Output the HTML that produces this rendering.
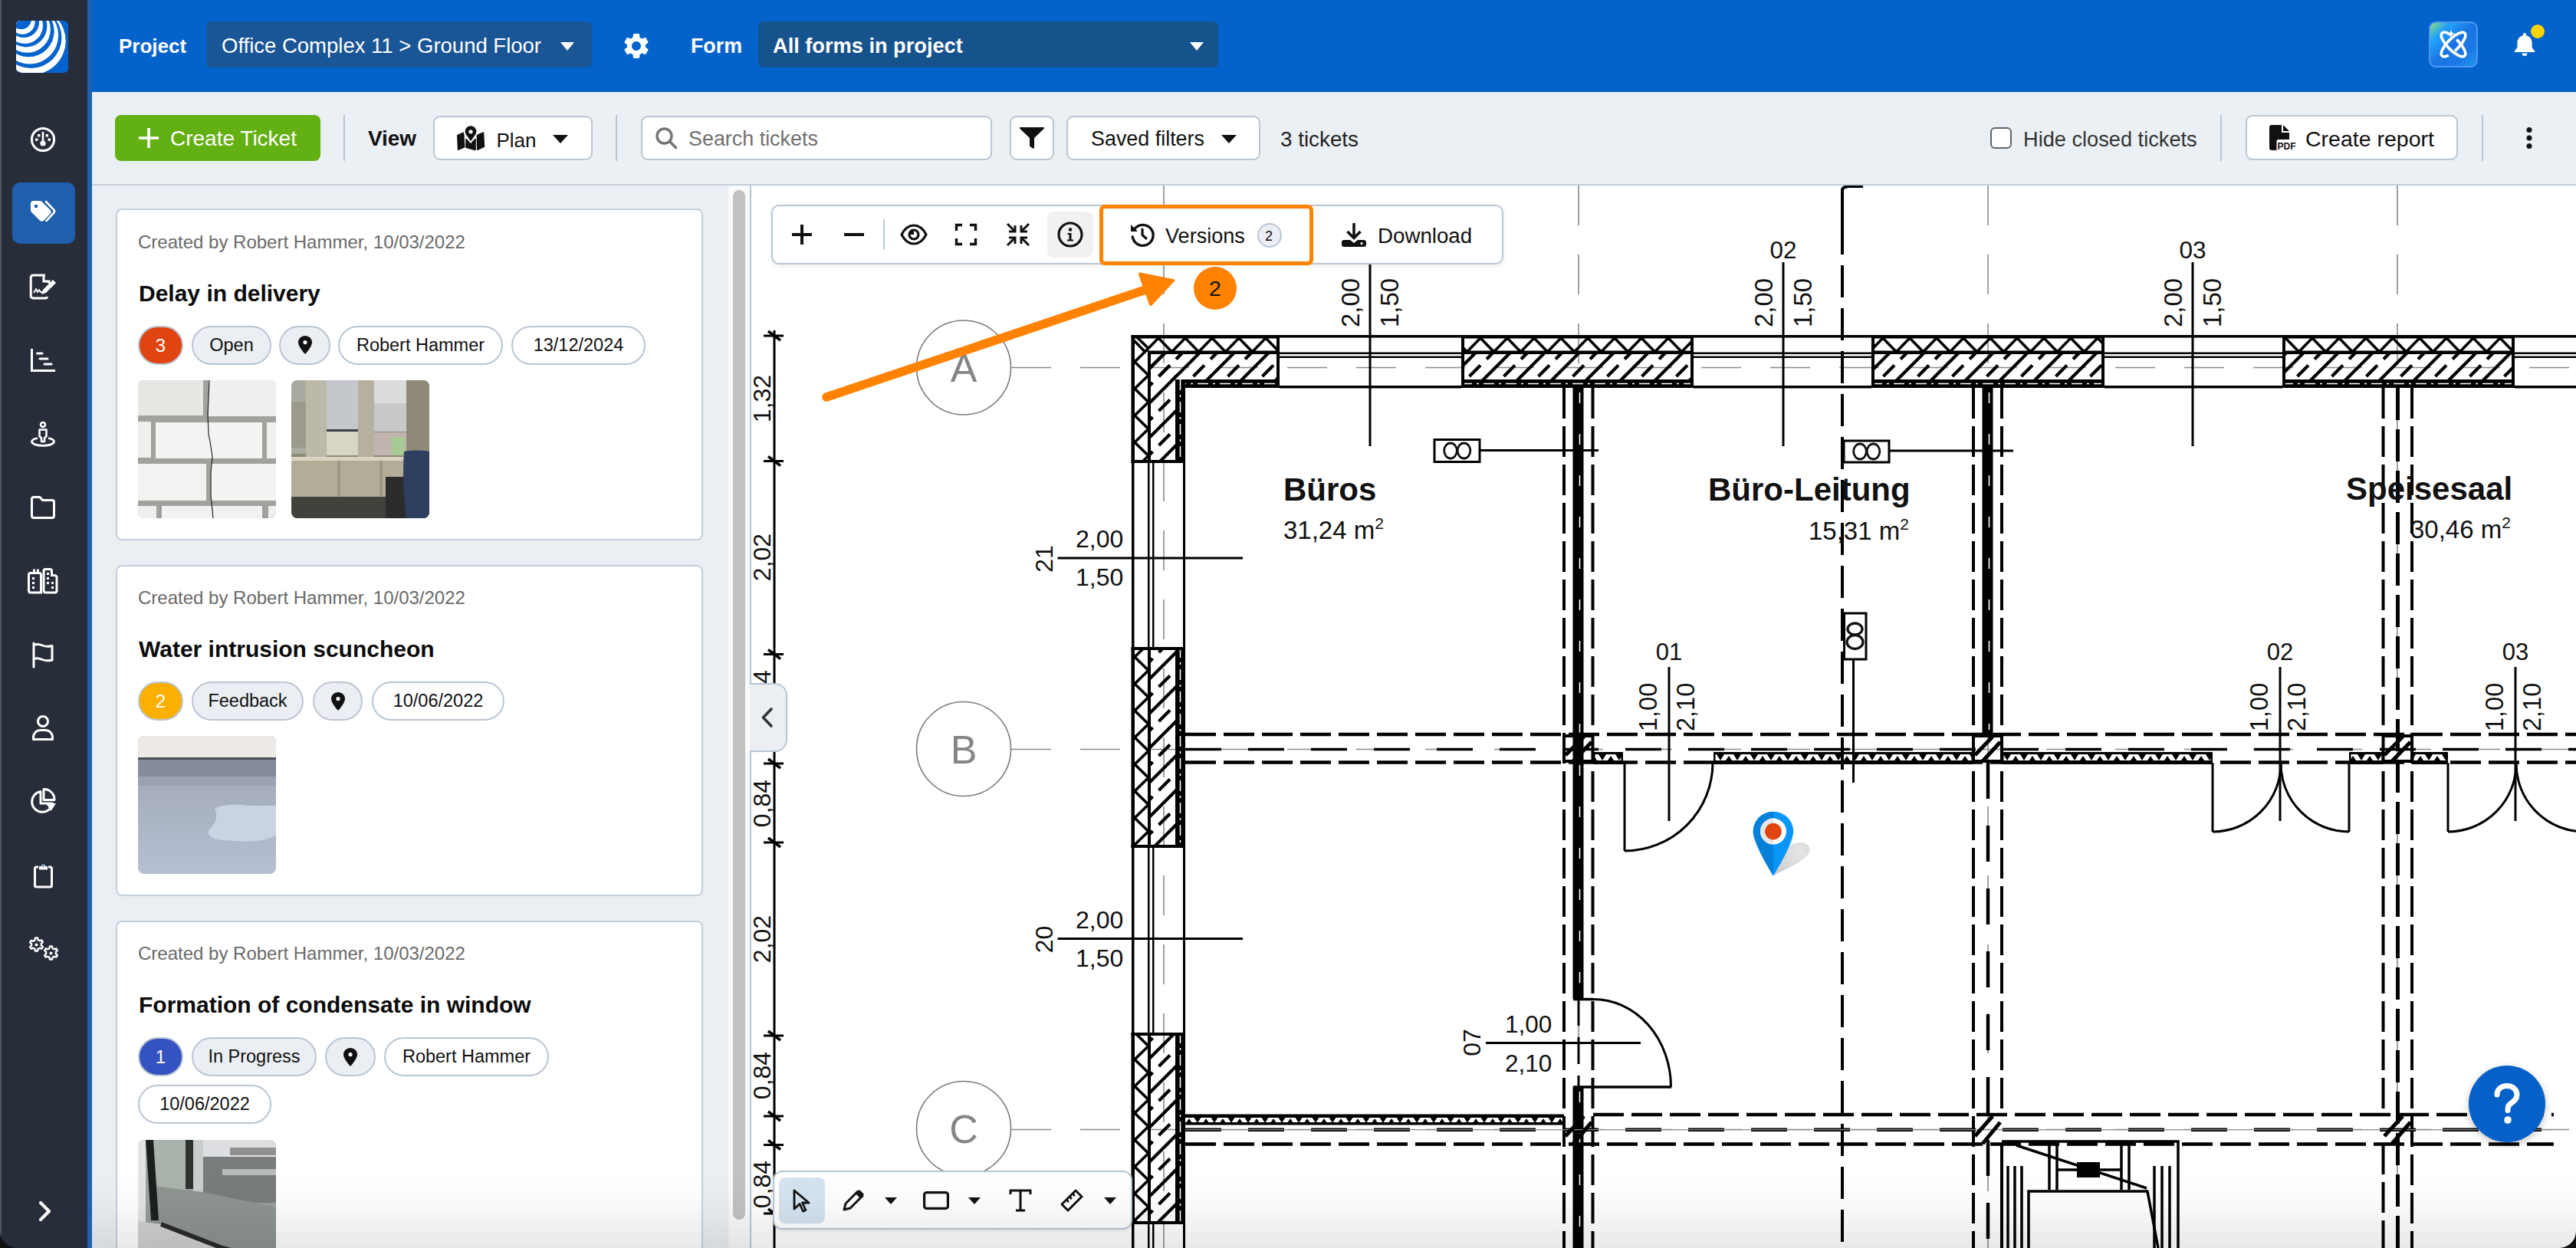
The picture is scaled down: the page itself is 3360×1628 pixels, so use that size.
<!DOCTYPE html>
<html><head><meta charset="utf-8">
<style>
*{box-sizing:border-box;margin:0;padding:0}
html,body{width:3360px;height:1628px;overflow:hidden;background:#272d39;font-family:"Liberation Sans",sans-serif}
.a{position:absolute}
.t{position:absolute;white-space:nowrap;line-height:1}
svg{position:absolute;overflow:visible}
.pill{position:absolute;height:51px;border:2px solid #b9c6d3;border-radius:26px;background:#fff;font-size:23.5px;line-height:47px;text-align:center;color:#111}
.pill.g{background:#ebeff3}
.num{position:absolute;width:59px;height:51px;border-radius:26px;border:2px solid #b9c6d3;color:#fff;font-size:24px;line-height:47px;text-align:center}
.btn{position:absolute;background:#fff;border:2px solid #bac6d2;border-radius:9px}
.sep{position:absolute;width:2px;background:#bac6d2}
</style></head><body>
<!-- window left edge -->
<div class="a" style="left:0;top:0;width:2px;height:1628px;background:#4e5562"></div>
<!-- sidebar stripe -->
<div class="a" style="left:114px;top:0;width:6px;height:1628px;background:#1f62b0"></div>
<!-- header -->
<div class="a" id="hdr" style="left:120px;top:0;width:3240px;height:120px;background:#0363ca"></div>
<!-- toolbar -->
<div class="a" style="left:120px;top:120px;width:3240px;height:122px;background:#ebf0f4;border-bottom:2px solid #c3cdd8"></div>

<!-- logo -->
<svg style="left:21px;top:27px" width="68" height="68" viewBox="0 0 68 68">
<defs><clipPath id="lc"><rect width="68" height="68" rx="6"/></clipPath></defs>
<g clip-path="url(#lc)">
<rect width="68" height="68" fill="#0463cc"/>
<circle cx="21.0" cy="26.4" r="43.7" fill="#fff"/>
<circle cx="19.4" cy="22.0" r="40.0" fill="#0463cc"/>
<circle cx="17.8" cy="19.1" r="37.4" fill="#fff"/>
<circle cx="16.2" cy="13.7" r="33.5" fill="#0463cc"/>
<circle cx="14.6" cy="11.4" r="30.3" fill="#fff"/>
<circle cx="13.0" cy="7.0" r="27.4" fill="#0463cc"/>
<circle cx="11.5" cy="6.5" r="23.5" fill="#fff"/>
<circle cx="9.9" cy="1.9" r="20.2" fill="#0463cc"/>
<circle cx="8.3" cy="1.5" r="16.3" fill="#fff"/>
<circle cx="6.7" cy="-2.2" r="13.4" fill="#0463cc"/>
</g></svg>

<!-- sidebar icons -->
<svg style="left:40px;top:166px" width="32" height="32" viewBox="0 0 32 32"><circle cx="16" cy="16" r="14.6" fill="none" stroke="#fff" stroke-width="3"/><path d="M16 6V19" stroke="#fff" stroke-width="2.6"/><circle cx="16" cy="21" r="3.6" fill="#fff"/><rect x="9" y="9" width="3.4" height="3.4" fill="#fff"/><rect x="19.6" y="9" width="3.4" height="3.4" fill="#fff"/><rect x="6" y="14.5" width="3.4" height="3.4" fill="#fff"/><rect x="22.6" y="14.5" width="3.4" height="3.4" fill="#fff"/></svg>
<div class="a" style="left:16px;top:238px;width:82px;height:80px;background:#1f5fae;border-radius:10px"></div>
<svg style="left:40px;top:262px" width="32" height="31" viewBox="0 0 32 31"><path fill="#fff" d="M0 3.5C0 1.5 1.5 0 3.5 0H12c1 0 2 .4 2.6 1.1l11 11c1.4 1.4 1.4 3.6 0 5L17 25.7c-1.4 1.4-3.6 1.4-5 0l-11-11C.4 14 0 13 0 12z"/><rect x="5" y="5" width="4" height="4" fill="#1f5fae"/><path d="M20 1 30 11.5c1.2 1.3 1.2 3.2 0 4.4L20.5 26" fill="none" stroke="#fff" stroke-width="2.6" stroke-linecap="round"/></svg>
<svg style="left:38px;top:357px" width="36" height="34" viewBox="0 0 36 34"><path d="M21 2H5.5C3.5 2 2.2 3.4 2.2 5.4V28.6c0 2 1.3 3.4 3.3 3.4H21c1.4 0 2.4-.8 2.6-2" fill="none" stroke="#fff" stroke-width="3" stroke-linejoin="round"/><path d="M19 2V10H26V13" fill="none" stroke="#fff" stroke-width="3"/><path d="M6 25l3-5 2 4 2-3 2 3h3" fill="none" stroke="#fff" stroke-width="1.8"/><path d="M16 27l2-6L31 8l4 4L22 25z" fill="#fff"/></svg>
<svg style="left:40px;top:455px" width="32" height="30" viewBox="0 0 32 30"><path d="M1.5 0V28.5H32" fill="none" stroke="#fff" stroke-width="3"/><path d="M8.5 6H15M12 13H22M18 20H27" stroke="#fff" stroke-width="3" stroke-linecap="round"/></svg>
<svg style="left:40px;top:550px" width="32" height="33" viewBox="0 0 32 33"><circle cx="16" cy="4" r="3" fill="none" stroke="#fff" stroke-width="2.6"/><path d="M11.5 10.5h9v8.5l-2.5 2.5v4.5h-4v-4.5l-2.5-2.5z" fill="none" stroke="#fff" stroke-width="2.6" stroke-linejoin="round"/><path d="M9 21.5C4 22.5 1.5 24 1.5 26c0 3 6.5 5.4 14.5 5.4S30.5 29 30.5 26c0-2-2.5-3.5-7.5-4.5" fill="none" stroke="#fff" stroke-width="2.8"/></svg>
<svg style="left:40px;top:647px" width="32" height="30" viewBox="0 0 32 30"><path d="M1.5 4C1.5 2.6 2.6 1.5 4 1.5H12l3.5 4H28c1.4 0 2.5 1.1 2.5 2.5V26c0 1.4-1.1 2.5-2.5 2.5H4c-1.4 0-2.5-1.1-2.5-2.5z" fill="none" stroke="#fff" stroke-width="3" stroke-linejoin="round"/></svg>
<svg style="left:36px;top:741px" width="40" height="34" viewBox="0 0 40 34"><path d="M5 6.5h10c1.6 0 2.5 1 2.5 2.5V32H4c-1.4 0-2.5-1-2.5-2.5V9c0-1.5 1-2.5 2.5-2.5zM8.5 1.5v5M13.5 1.5v5" fill="none" stroke="#fff" stroke-width="3"/><path d="M21 4c0-1.5 1-2.5 2.5-2.5H29c1.5 0 2.5 1 2.5 2.5v5.5H35c1.5 0 3 1 3 2.5V29.5c0 1.5-1 2.5-2.5 2.5H23.5c-1.5 0-2.5-1-2.5-2.5z" fill="none" stroke="#fff" stroke-width="3"/><g fill="#fff"><rect x="6" y="12" width="3" height="3"/><rect x="6" y="18" width="3" height="3"/><rect x="6" y="24" width="3" height="3"/><rect x="25" y="6" width="3" height="3"/><rect x="25" y="12" width="3" height="3"/><rect x="25" y="18" width="3" height="3"/><rect x="31" y="18" width="3" height="3"/><rect x="31" y="24" width="3" height="3"/></g></svg>
<svg style="left:42px;top:838px" width="28" height="33" viewBox="0 0 28 33"><path d="M2 1V32" stroke="#fff" stroke-width="3" stroke-linecap="round"/><path d="M2 3.5c4-1.5 7-1.5 11.5 0.5s7 2 12.5 0.5V23c-5.5 1.5-8 1.5-12.5-0.5S6 20 2 21.5" fill="none" stroke="#fff" stroke-width="3" stroke-linejoin="round"/></svg>
<svg style="left:42px;top:933px" width="28" height="33" viewBox="0 0 28 33"><circle cx="14" cy="8" r="6.5" fill="none" stroke="#fff" stroke-width="3"/><path d="M1.5 31.5V29c0-5.5 4-9.5 9.5-9.5h6c5.5 0 9.5 4 9.5 9.5v2.5z" fill="none" stroke="#fff" stroke-width="3" stroke-linejoin="round"/></svg>
<svg style="left:40px;top:1028px" width="33" height="33" viewBox="0 0 33 33"><path d="M13 4.5A13.5 13.5 0 1 0 28.5 20H13z" fill="none" stroke="#fff" stroke-width="3" stroke-linejoin="round"/><path d="M17 1.5A13.5 13.5 0 0 1 31 15.5H17z" fill="none" stroke="#fff" stroke-width="3" stroke-linejoin="round"/><path d="M20 20H33L26.5 30z" fill="#fff"/></svg>
<svg style="left:44px;top:1125px" width="25" height="34" viewBox="0 0 25 34"><path d="M6 6H3.5C2.4 6 1.5 6.9 1.5 8V30c0 1.1.9 2 2 2H21.5c1.1 0 2-.9 2-2V8c0-1.1-.9-2-2-2H19" fill="none" stroke="#fff" stroke-width="3"/><path d="M7 9.5H18V5h-3a2.5 2.5 0 0 0-5 0H7z" fill="#fff"/><circle cx="12.5" cy="4.5" r="1.2" fill="#1f5fae"/></svg>
<svg style="left:36px;top:1222px" width="40" height="33" viewBox="0 0 40 33"><g fill="none" stroke="#fff" stroke-width="2.4" stroke-linejoin="round"><path d="M10 1.5h3l.6 2.6 2.2 1.2 2.5-1 1.6 2.6-2 1.8v2.6l2 1.8-1.6 2.6-2.5-1-2.2 1.2-.6 2.6h-3l-.6-2.6-2.2-1.2-2.5 1-1.6-2.6 2-1.8V9.2l-2-1.8 1.6-2.6 2.5 1 2.2-1.2z"/><path d="M29 12.5h3l.6 2.6 2.2 1.2 2.5-1 1.6 2.6-2 1.8v2.6l2 1.8-1.6 2.6-2.5-1-2.2 1.2-.6 2.6h-3l-.6-2.6-2.2-1.2-2.5 1-1.6-2.6 2-1.8v-2.6l-2-1.8 1.6-2.6 2.5 1 2.2-1.2z"/></g><circle cx="11.5" cy="10.5" r="2" fill="#fff"/><circle cx="30.5" cy="21.5" r="2" fill="#fff"/></svg>
<svg style="left:50px;top:1566px" width="18" height="28" viewBox="0 0 18 28"><path d="M3 3 14 14 3 25" fill="none" stroke="#fff" stroke-width="4.2" stroke-linecap="round" stroke-linejoin="round"/></svg>

<!-- header content -->
<div class="t" style="left:155px;top:47px;font-size:26px;font-weight:bold;color:#fff">Project</div>
<div class="a" style="left:269px;top:28px;width:503px;height:60px;background:#1a5596;border-radius:6px"></div>
<div class="t" style="left:289px;top:45.7px;font-size:27.5px;color:#fff">Office Complex 11 &gt; Ground Floor</div>
<svg style="left:731px;top:55px" width="18" height="11"><path d="M0 0H18L9 11Z" fill="#fff"/></svg>
<svg style="left:810px;top:40px" width="40" height="40" viewBox="0 0 24 24"><path fill="#fff" d="M19.14 12.94c.04-.3.06-.61.06-.94 0-.32-.02-.64-.07-.94l2.03-1.58a.49.49 0 0 0 .12-.61l-1.92-3.32a.488.488 0 0 0-.59-.22l-2.39.96c-.5-.38-1.03-.7-1.62-.94l-.36-2.54a.484.484 0 0 0-.48-.41h-3.84c-.24 0-.43.17-.47.41l-.36 2.54c-.59.24-1.13.57-1.62.94l-2.39-.96c-.22-.08-.47 0-.59.22L2.74 8.87c-.12.21-.08.47.12.61l2.03 1.58c-.05.3-.09.63-.09.94s.02.64.07.94l-2.03 1.58a.49.49 0 0 0-.12.61l1.92 3.32c.12.22.37.29.59.22l2.39-.96c.5.38 1.03.7 1.62.94l.36 2.54c.05.24.24.41.48.41h3.84c.24 0 .44-.17.47-.41l.36-2.54c.59-.24 1.13-.56 1.62-.94l2.39.96c.22.08.47 0 .59-.22l1.92-3.32c.12-.22.07-.47-.12-.61l-2.01-1.58zM12 15.6c-1.98 0-3.6-1.62-3.6-3.6s1.62-3.6 3.6-3.6 3.6 1.62 3.6 3.6-1.62 3.6-3.6 3.6z"/></svg>
<div class="t" style="left:901px;top:47px;font-size:26.8px;font-weight:bold;color:#fff">Form</div>
<div class="a" style="left:989px;top:28px;width:600px;height:60px;background:#16528c;border-radius:6px"></div>
<div class="t" style="left:1008px;top:46px;font-size:27.2px;font-weight:bold;color:#fff">All forms in project</div>
<svg style="left:1552px;top:55px" width="18" height="11"><path d="M0 0H18L9 11Z" fill="#fff"/></svg>
<!-- AI button -->
<div class="a" style="left:3168px;top:28px;width:64px;height:60px;border-radius:9px;border:2px solid #4d97f2;background:linear-gradient(135deg,#8ce07a 0%,#22a2fc 22%,#1a75e2 50%,#1a78e4 75%,#2398f6 100%)"></div>
<svg style="left:3177px;top:35px" width="46" height="46" viewBox="0 0 46 46"><g fill="none" stroke="#fff" stroke-width="3.6"><ellipse cx="23" cy="23" rx="21" ry="7.6" transform="rotate(45 23 23)" stroke-dasharray="60 9 200"/><ellipse cx="23" cy="23" rx="21" ry="7.6" transform="rotate(-45 23 23)" stroke-dasharray="28 10 200"/></g><path d="M20 3.5 21.3 7.7 25.5 9 21.3 10.3 20 14.5 18.7 10.3 14.5 9 18.7 7.7z" fill="#fff"/></svg>
<!-- bell -->
<svg style="left:3279px;top:43px" width="28" height="31" viewBox="0 0 28 31"><path fill="#fff" d="M14 0c1.2 0 2 .9 2 2v1.2c4.6 1 7.6 4.8 7.6 9.6v6.4l3.6 4.2V25H.8v-1.6l3.6-4.2v-6.4c0-4.8 3-8.6 7.6-9.6V2c0-1.1.8-2 2-2zM10.5 26.5h7a3.5 3.5 0 0 1-7 0z"/></svg>
<div class="a" style="left:3301px;top:32px;width:18px;height:18px;border-radius:50%;background:#fdd400"></div>

<!-- toolbar content -->
<div class="a" style="left:150px;top:150px;width:268px;height:60px;background:#63b012;border-radius:8px"></div>
<svg style="left:181px;top:167px" width="26" height="26"><path d="M13 0V26M0 13H26" stroke="#fff" stroke-width="3.6"/></svg>
<div class="t" style="left:222px;top:167.3px;font-size:28px;color:#fff">Create Ticket</div>
<div class="sep" style="left:448px;top:150px;height:60px"></div>
<div class="t" style="left:480px;top:167.4px;font-size:27.9px;font-weight:bold;color:#111">View</div>
<div class="btn" style="left:565px;top:151px;width:208px;height:58px"></div>
<svg style="left:596px;top:164px" width="38" height="34" viewBox="0 0 38 34"><g fill="#111" stroke="#111" stroke-width="1.6" stroke-linejoin="round"><path d="M0.8 12.5 8.6 9.3 9.6 27.8 1.6 31.2z"/><path d="M12 17.5 18 23.5 24 17.5V31.5L12 28.3z"/><path d="M26.4 12.5 34.4 9 35.4 27.3 26.8 31.2z"/></g><path d="M18 21.8 10.8 11.5A8.2 8.2 0 1 1 25.2 11.5z" fill="#111" stroke="#fff" stroke-width="1.8"/><circle cx="18" cy="7.8" r="2.6" fill="#fff"/></svg>
<div class="t" style="left:647.5px;top:170.2px;font-size:26px;color:#111">Plan</div>
<svg style="left:721px;top:176px" width="20" height="11"><path d="M0 0H20L10 11Z" fill="#111"/></svg>
<div class="sep" style="left:803px;top:150px;height:60px"></div>
<div class="btn" style="left:836px;top:151px;width:458px;height:58px;border-radius:9px"></div>
<svg style="left:855px;top:166px" width="28" height="28" viewBox="0 0 28 28"><circle cx="11.5" cy="11.5" r="9.5" fill="none" stroke="#757575" stroke-width="3.4"/><path d="M18.5 18.5 26.5 26.5" stroke="#757575" stroke-width="3.6" stroke-linecap="round"/></svg>
<div class="t" style="left:898px;top:168.2px;font-size:26.9px;color:#707070">Search tickets</div>
<div class="btn" style="left:1317px;top:151px;width:58px;height:58px"></div>
<svg style="left:1330px;top:166px" width="32" height="28" viewBox="0 0 32 28"><path fill="#111" d="M1 0H31c1 0 1.5 1 .8 1.8L19 14v12.5c0 1-1 1.6-1.8 1L13.5 25c-.5-.4-.5-.8-.5-1.3V14L.2 1.8C-.5 1 0 0 1 0z"/></svg>
<div class="btn" style="left:1391px;top:151px;width:253px;height:58px"></div>
<div class="t" style="left:1423px;top:168.2px;font-size:26.9px;color:#111">Saved filters</div>
<svg style="left:1593px;top:176px" width="20" height="11"><path d="M0 0H20L10 11Z" fill="#111"/></svg>
<div class="t" style="left:1670px;top:167.5px;font-size:27.8px;color:#222">3 tickets</div>
<div class="a" style="left:2596px;top:166px;width:28px;height:28px;border:2.5px solid #5c6670;border-radius:6px;background:#fff"></div>
<div class="t" style="left:2639px;top:168px;font-size:27.2px;color:#333">Hide closed tickets</div>
<div class="sep" style="left:2896px;top:150px;height:60px"></div>
<div class="btn" style="left:2929px;top:150px;width:277px;height:59px"></div>
<svg style="left:2960px;top:163px" width="32" height="33" viewBox="0 0 32 33"><path fill="#111" d="M3 0H16V10H26V19H12c-1.5 0-2.5 1-2.5 2.5V33H3c-1.7 0-3-1.3-3-3V3c0-1.7 1.3-3 3-3zM18 0l8 8H18z"/><text x="10.5" y="32" font-family="Liberation Sans" font-weight="bold" font-size="12" fill="#111">PDF</text></svg>
<div class="t" style="left:3007px;top:166.9px;font-size:28.5px;color:#111">Create report</div>
<div class="sep" style="left:3237px;top:150px;height:60px"></div>
<svg style="left:3293px;top:166px" width="12" height="28"><circle cx="6" cy="3.5" r="3.5" fill="#111"/><circle cx="6" cy="14" r="3.5" fill="#111"/><circle cx="6" cy="24.5" r="3.5" fill="#111"/></svg>

<!-- left panel -->
<div class="a" style="left:120px;top:242px;width:860px;height:1386px;background:#ebeff3"></div>
<!-- left panel content -->
<!-- panel scroll -->
<div class="a" style="left:949px;top:242px;width:29px;height:1386px;background:#fafafa;border-left:1px solid #e6e6e6"></div>
<div class="a" style="left:956px;top:248px;width:16px;height:1343px;background:#c1c1c1;border-radius:8px"></div>
<div class="a" style="left:978px;top:242px;width:2px;height:1386px;background:#b9c7d4"></div>
<div class="a" style="left:151px;top:272px;width:766px;height:433px;background:#fff;border:2px solid #c3cfdb;border-radius:8px"></div><div class="t" style="left:180px;top:304.2px;font-size:24px;color:#6a6a6a">Created by Robert Hammer, 10/03/2022</div><div class="t" style="left:181px;top:367.6px;font-size:30px;font-weight:bold;color:#0b0b0b">Delay in delivery</div><div class="num" style="left:180px;top:424.5px;background:#e04410">3</div><div class="pill g" style="left:250px;top:424.5px;width:104px">Open</div><div class="pill g" style="left:364px;top:424.5px;width:67px"></div><svg style="left:388.5px;top:438.0px" width="18" height="24" viewBox="0 0 18 24"><path fill="#111" d="M9 0C4 0 0 3.9 0 8.8 0 14.5 9 24 9 24s9-9.5 9-15.2C18 3.9 14 0 9 0z"/><circle cx="9" cy="8.6" r="2.6" fill="#fff"/></svg><div class="pill" style="left:441px;top:424.5px;width:215px">Robert Hammer</div><div class="pill" style="left:667px;top:424.5px;width:175px">13/12/2024</div><svg style="left:180px;top:496px" width="180" height="180" viewBox="0 0 180 180"><defs><clipPath id="ic1"><rect width="180" height="180" rx="8"/></clipPath></defs><g clip-path="url(#ic1)">
<rect width="180" height="180" fill="#a3a19d"/>
<rect x="0" y="0" width="85" height="46" fill="#e9e7e3"/><rect x="92" y="0" width="88" height="47" fill="#f0efed"/>
<rect x="-10" y="54" width="27" height="47" fill="#efefed"/><rect x="23" y="55" width="139" height="47" fill="#f3f3f2"/><rect x="168" y="55" width="20" height="47" fill="#f1f1f0"/>
<rect x="0" y="109" width="89" height="48" fill="#f2f2f1"/><rect x="95" y="109" width="90" height="48" fill="#f3f3f2"/>
<rect x="-5" y="164" width="29" height="20" fill="#efefef"/><rect x="31" y="164" width="131" height="20" fill="#f2f2f4"/><rect x="170" y="164" width="20" height="20" fill="#efefef"/>
<path d="M93 0 91 45 92 70 94 80 97 100 95 120 95 150 98 180" fill="none" stroke="#222" stroke-width="1.2"/></g></svg><svg style="left:380px;top:496px" width="180" height="180" viewBox="0 0 180 180"><defs><clipPath id="ic2"><rect width="180" height="180" rx="8"/></clipPath></defs><g clip-path="url(#ic2)">
<rect width="180" height="180" fill="#8e8a78"/>
<rect x="0" y="0" width="19" height="96" fill="#a9aaa0"/><rect x="0" y="28" width="19" height="60" fill="#9b9a8c"/>
<rect x="19" y="0" width="27" height="100" fill="#bdb9a8"/>
<rect x="46" y="0" width="41" height="64" fill="#c4c7cb"/><rect x="46" y="64" width="41" height="3" fill="#3c4044"/><rect x="46" y="67" width="41" height="31" fill="#d8d4c6"/>
<rect x="87" y="0" width="21" height="100" fill="#b6b19e"/>
<rect x="108" y="0" width="42" height="30" fill="#dadcde"/><rect x="108" y="30" width="42" height="37" fill="#c8c8ca"/><rect x="108" y="68" width="42" height="30" fill="#c2b5af"/><rect x="130" y="74" width="18" height="24" fill="#a8ca94"/>
<rect x="150" y="0" width="30" height="100" fill="#8f8a78"/>
<rect x="0" y="100" width="180" height="53" fill="#b3ad98"/>
<rect x="0" y="100" width="180" height="5" fill="#d8d4c4"/>
<rect x="60" y="105" width="4" height="48" fill="#9c9682"/><rect x="115" y="105" width="4" height="48" fill="#9c9682"/>
<rect x="0" y="152" width="180" height="28" fill="#42423d"/>
<rect x="123" y="126" width="26" height="54" fill="#2c2c2d"/>
<path d="M147 93c10-2 26-2 33 0V180H150c-4-30-5-60-3-87z" fill="#2f3f60"/>
</g></svg><div class="a" style="left:151px;top:737px;width:766px;height:432px;background:#fff;border:2px solid #c3cfdb;border-radius:8px"></div><div class="t" style="left:180px;top:767.7px;font-size:24px;color:#6a6a6a">Created by Robert Hammer, 10/03/2022</div><div class="t" style="left:181px;top:831.6px;font-size:30px;font-weight:bold;color:#0b0b0b">Water intrusion scuncheon</div><div class="num" style="left:180px;top:889px;background:#fbb000">2</div><div class="pill g" style="left:250px;top:889px;width:146px">Feedback</div><div class="pill g" style="left:408px;top:889px;width:65px"></div><svg style="left:431.5px;top:902.5px" width="18" height="24" viewBox="0 0 18 24"><path fill="#111" d="M9 0C4 0 0 3.9 0 8.8 0 14.5 9 24 9 24s9-9.5 9-15.2C18 3.9 14 0 9 0z"/><circle cx="9" cy="8.6" r="2.6" fill="#fff"/></svg><div class="pill" style="left:485px;top:889px;width:173px">10/06/2022</div><svg style="left:180px;top:960px" width="180" height="180" viewBox="0 0 180 180"><defs><clipPath id="ic3"><rect width="180" height="180" rx="8"/></clipPath><linearGradient id="wg" x1="0" y1="0" x2="0" y2="1"><stop offset="0" stop-color="#8c93a3"/><stop offset="0.3" stop-color="#a3abbb"/><stop offset="1" stop-color="#b6c0d2"/></linearGradient></defs><g clip-path="url(#ic3)">
<rect width="180" height="180" fill="url(#wg)"/>
<rect width="180" height="28" fill="#ede9e6"/>
<rect y="28" width="180" height="3" fill="#4a505a"/>
<rect y="31" width="180" height="22" fill="#858b98"/>
<rect y="53" width="180" height="12" fill="#9aa1af"/>
<path d="M100 95c8-6 30-6 45-4l35 0V130c-20 10-45 8-70 6-18-2-22-10-15-16 6-5 10-15 5-25z" fill="#c9d3e4"/>
</g></svg><div class="a" style="left:151px;top:1201px;width:766px;height:500px;background:#fff;border:2px solid #c3cfdb;border-radius:8px"></div><div class="t" style="left:180px;top:1231.7px;font-size:24px;color:#6a6a6a">Created by Robert Hammer, 10/03/2022</div><div class="t" style="left:181px;top:1295.6px;font-size:30px;font-weight:bold;color:#0b0b0b">Formation of condensate in window</div><div class="num" style="left:180px;top:1353px;background:#3552c1">1</div><div class="pill g" style="left:250px;top:1353px;width:163px">In Progress</div><div class="pill g" style="left:424px;top:1353px;width:66px"></div><svg style="left:448.0px;top:1366.5px" width="18" height="24" viewBox="0 0 18 24"><path fill="#111" d="M9 0C4 0 0 3.9 0 8.8 0 14.5 9 24 9 24s9-9.5 9-15.2C18 3.9 14 0 9 0z"/><circle cx="9" cy="8.6" r="2.6" fill="#fff"/></svg><div class="pill" style="left:501px;top:1353px;width:215px">Robert Hammer</div><div class="pill" style="left:180px;top:1415px;width:174px">10/06/2022</div><svg style="left:180px;top:1487px" width="180" height="180" viewBox="0 0 180 180"><defs><clipPath id="ic4"><rect width="180" height="180" rx="8"/></clipPath><linearGradient id="cg" x1="0" y1="0" x2="0" y2="1"><stop offset="0" stop-color="#a7aca8"/><stop offset="1" stop-color="#8b918d"/></linearGradient></defs><g clip-path="url(#ic4)">
<rect width="180" height="180" fill="url(#cg)"/>
<rect x="85" y="0" width="95" height="22" fill="#dcdee2"/>
<rect x="85" y="22" width="95" height="60" fill="#787c7c"/>
<rect x="120" y="10" width="60" height="10" fill="#8e8f8e"/>
<rect x="110" y="38" width="70" height="8" fill="#b8bab8"/>
<rect x="72" y="0" width="13" height="70" fill="#c9cdcb"/>
<rect x="62" y="0" width="10" height="64" fill="#2c322e"/>
<rect x="20" y="0" width="42" height="180" fill="#aab2ac"/>
<path d="M20 60 85 68 180 88V180H20z" fill="#8e9490"/>
<path d="M0 0H10V180H0z" fill="#e2e3e2"/>
<path d="M10 0H20L27 105H17z" fill="#1b201d"/>
<path d="M0 106 30 110 110 141 180 160V190H0z" fill="#cfd0cf"/>
<path d="M30 110 110 141 180 160" fill="none" stroke="#2a2c2a" stroke-width="6"/>
</g></svg>
<!-- plan area -->
<div class="a" id="plan" style="left:980px;top:242px;width:2380px;height:1386px;background:#fff;overflow:hidden"></div>

<!-- PLAN -->
<svg style="left:980px;top:242px;overflow:hidden" width="2380" height="1386" viewBox="980 242 2380 1386" font-family="Liberation Sans, sans-serif">
<defs>
<pattern id="zzh" x="1476" y="441" width="35" height="18" patternUnits="userSpaceOnUse"><path d="M0 0 17.5 18 35 0" fill="none" stroke="#000" stroke-width="3.6"/></pattern>
<pattern id="zzv" x="1480" y="437" width="18" height="35" patternUnits="userSpaceOnUse"><path d="M0 0 18 17.5 0 35" fill="none" stroke="#000" stroke-width="3.6"/></pattern>
<pattern id="dg" x="0" y="0" width="45" height="45" patternUnits="userSpaceOnUse"><path d="M-5 50 50 -5M-5 5 5 -5M40 50 50 40M4 18.5 18.5 4M26.5 41 41 26.5" fill="none" stroke="#000" stroke-width="4.2"/></pattern>
<pattern id="tri" x="0" y="984" width="22" height="8" patternUnits="userSpaceOnUse"><path d="M0 0 5 0 0 8z M22 0 17 0 22 8z M7 8 11 2 15 8z" fill="#000"/></pattern>
<pattern id="tri2" x="0" y="1457" width="22" height="8" patternUnits="userSpaceOnUse"><path d="M0 0 5 0 0 8z M22 0 17 0 22 8z M7 8 11 2 15 8z" fill="#000"/></pattern>
</defs>
<line x1="1518" y1="242" x2="1518" y2="1628" stroke="#8a8a8a" stroke-width="1.6" stroke-dasharray="52 38" stroke-dashoffset="0" stroke-linecap="butt"/>
<line x1="2059" y1="242" x2="2059" y2="1628" stroke="#8a8a8a" stroke-width="1.6" stroke-dasharray="52 38" stroke-dashoffset="0" stroke-linecap="butt"/>
<line x1="2593" y1="242" x2="2593" y2="1628" stroke="#8a8a8a" stroke-width="1.6" stroke-dasharray="52 38" stroke-dashoffset="0" stroke-linecap="butt"/>
<line x1="3127" y1="242" x2="3127" y2="1628" stroke="#8a8a8a" stroke-width="1.6" stroke-dasharray="52 38" stroke-dashoffset="0" stroke-linecap="butt"/>
<line x1="1319" y1="479.5" x2="3360" y2="479.5" stroke="#8a8a8a" stroke-width="1.6" stroke-dasharray="52 38" stroke-dashoffset="0" stroke-linecap="butt"/>
<line x1="1319" y1="977.5" x2="3360" y2="977.5" stroke="#8a8a8a" stroke-width="1.6" stroke-dasharray="52 38" stroke-dashoffset="0" stroke-linecap="butt"/>
<line x1="1319" y1="1473.5" x2="3360" y2="1473.5" stroke="#8a8a8a" stroke-width="1.6" stroke-dasharray="52 38" stroke-dashoffset="0" stroke-linecap="butt"/>
<circle cx="1257" cy="479.5" r="61.5" fill="#fff" stroke="#7a7a7a" stroke-width="1.6"/>
<text x="1257" y="498.0" font-size="52" text-anchor="middle" font-weight="normal" fill="#858585">A</text>
<circle cx="1257" cy="977" r="61.5" fill="#fff" stroke="#7a7a7a" stroke-width="1.6"/>
<text x="1257" y="995.5" font-size="52" text-anchor="middle" font-weight="normal" fill="#858585">B</text>
<circle cx="1257" cy="1472" r="61.5" fill="#fff" stroke="#7a7a7a" stroke-width="1.6"/>
<text x="1257" y="1490.5" font-size="52" text-anchor="middle" font-weight="normal" fill="#858585">C</text>
<line x1="1010" y1="431" x2="1010" y2="1628" stroke="#000" stroke-width="3" stroke-linecap="butt"/>
<line x1="996" y1="438" x2="1022" y2="438" stroke="#000" stroke-width="3" stroke-linecap="butt"/>
<line x1="1002" y1="432" x2="1018" y2="444" stroke="#000" stroke-width="3.5" stroke-linecap="butt"/>
<line x1="996" y1="601.5" x2="1022" y2="601.5" stroke="#000" stroke-width="3" stroke-linecap="butt"/>
<line x1="1002" y1="595.5" x2="1018" y2="607.5" stroke="#000" stroke-width="3.5" stroke-linecap="butt"/>
<line x1="996" y1="853.5" x2="1022" y2="853.5" stroke="#000" stroke-width="3" stroke-linecap="butt"/>
<line x1="1002" y1="847.5" x2="1018" y2="859.5" stroke="#000" stroke-width="3.5" stroke-linecap="butt"/>
<line x1="996" y1="996" x2="1022" y2="996" stroke="#000" stroke-width="3" stroke-linecap="butt"/>
<line x1="1002" y1="990" x2="1018" y2="1002" stroke="#000" stroke-width="3.5" stroke-linecap="butt"/>
<line x1="996" y1="1099" x2="1022" y2="1099" stroke="#000" stroke-width="3" stroke-linecap="butt"/>
<line x1="1002" y1="1093" x2="1018" y2="1105" stroke="#000" stroke-width="3.5" stroke-linecap="butt"/>
<line x1="996" y1="1351" x2="1022" y2="1351" stroke="#000" stroke-width="3" stroke-linecap="butt"/>
<line x1="1002" y1="1345" x2="1018" y2="1357" stroke="#000" stroke-width="3.5" stroke-linecap="butt"/>
<line x1="996" y1="1456" x2="1022" y2="1456" stroke="#000" stroke-width="3" stroke-linecap="butt"/>
<line x1="1002" y1="1450" x2="1018" y2="1462" stroke="#000" stroke-width="3.5" stroke-linecap="butt"/>
<line x1="996" y1="1493.5" x2="1022" y2="1493.5" stroke="#000" stroke-width="3" stroke-linecap="butt"/>
<line x1="1002" y1="1487.5" x2="1018" y2="1499.5" stroke="#000" stroke-width="3.5" stroke-linecap="butt"/>
<line x1="996" y1="1583" x2="1022" y2="1583" stroke="#000" stroke-width="3" stroke-linecap="butt"/>
<line x1="1002" y1="1577" x2="1018" y2="1589" stroke="#000" stroke-width="3.5" stroke-linecap="butt"/>
<text x="1005" y="520" font-size="32" text-anchor="middle" font-weight="normal" fill="#111" transform="rotate(-90 1005 520)">1,32</text>
<text x="1005" y="727" font-size="32" text-anchor="middle" font-weight="normal" fill="#111" transform="rotate(-90 1005 727)">2,02</text>
<text x="1005" y="905" font-size="32" text-anchor="middle" font-weight="normal" fill="#111" transform="rotate(-90 1005 905)">0,84</text>
<text x="1005" y="1048" font-size="32" text-anchor="middle" font-weight="normal" fill="#111" transform="rotate(-90 1005 1048)">0,84</text>
<text x="1005" y="1225" font-size="32" text-anchor="middle" font-weight="normal" fill="#111" transform="rotate(-90 1005 1225)">2,02</text>
<text x="1005" y="1403" font-size="32" text-anchor="middle" font-weight="normal" fill="#111" transform="rotate(-90 1005 1403)">0,84</text>
<text x="1005" y="1545" font-size="32" text-anchor="middle" font-weight="normal" fill="#111" transform="rotate(-90 1005 1545)">0,84</text>
<rect x="1480" y="441" width="189" height="18" fill="url(#zzh)"/>
<rect x="1501" y="462" width="168" height="34" fill="url(#dg)"/>
<rect x="1476" y="437" width="193" height="4.5" fill="#000"/>
<rect x="1497" y="457.5" width="172" height="4.5" fill="#000"/>
<rect x="1533" y="495" width="136" height="11" fill="#000"/>
<line x1="1533" y1="500.5" x2="1669" y2="500.5" stroke="#fff" stroke-width="1.6" stroke-dasharray="14 6 3 6" stroke-dashoffset="0" stroke-linecap="butt"/>
<rect x="1476" y="437" width="4" height="69" fill="#000"/>
<rect x="1665" y="437" width="4" height="69" fill="#000"/>
<rect x="1906" y="441" width="303" height="18" fill="url(#zzh)"/>
<rect x="1906" y="462" width="303" height="34" fill="url(#dg)"/>
<rect x="1906" y="437" width="303" height="4.5" fill="#000"/>
<rect x="1906" y="457.5" width="303" height="4.5" fill="#000"/>
<rect x="1906" y="495" width="303" height="11" fill="#000"/>
<line x1="1906" y1="500.5" x2="2209" y2="500.5" stroke="#fff" stroke-width="1.6" stroke-dasharray="14 6 3 6" stroke-dashoffset="0" stroke-linecap="butt"/>
<rect x="1906" y="437" width="4" height="69" fill="#000"/>
<rect x="2205" y="437" width="4" height="69" fill="#000"/>
<rect x="2441" y="441" width="304" height="18" fill="url(#zzh)"/>
<rect x="2441" y="462" width="304" height="34" fill="url(#dg)"/>
<rect x="2441" y="437" width="304" height="4.5" fill="#000"/>
<rect x="2441" y="457.5" width="304" height="4.5" fill="#000"/>
<rect x="2441" y="495" width="304" height="11" fill="#000"/>
<line x1="2441" y1="500.5" x2="2745" y2="500.5" stroke="#fff" stroke-width="1.6" stroke-dasharray="14 6 3 6" stroke-dashoffset="0" stroke-linecap="butt"/>
<rect x="2441" y="437" width="4" height="69" fill="#000"/>
<rect x="2741" y="437" width="4" height="69" fill="#000"/>
<rect x="2977" y="441" width="303" height="18" fill="url(#zzh)"/>
<rect x="2977" y="462" width="303" height="34" fill="url(#dg)"/>
<rect x="2977" y="437" width="303" height="4.5" fill="#000"/>
<rect x="2977" y="457.5" width="303" height="4.5" fill="#000"/>
<rect x="2977" y="495" width="303" height="11" fill="#000"/>
<line x1="2977" y1="500.5" x2="3280" y2="500.5" stroke="#fff" stroke-width="1.6" stroke-dasharray="14 6 3 6" stroke-dashoffset="0" stroke-linecap="butt"/>
<rect x="2977" y="437" width="4" height="69" fill="#000"/>
<rect x="3276" y="437" width="4" height="69" fill="#000"/>
<rect x="1669" y="437" width="237" height="3.5" fill="#000"/>
<rect x="1669" y="459.5" width="237" height="2.5" fill="#000"/>
<rect x="1669" y="464.5" width="237" height="2.5" fill="#000"/>
<rect x="1669" y="503" width="237" height="3.5" fill="#000"/>
<rect x="2209" y="437" width="232" height="3.5" fill="#000"/>
<rect x="2209" y="459.5" width="232" height="2.5" fill="#000"/>
<rect x="2209" y="464.5" width="232" height="2.5" fill="#000"/>
<rect x="2209" y="503" width="232" height="3.5" fill="#000"/>
<rect x="2745" y="437" width="232" height="3.5" fill="#000"/>
<rect x="2745" y="459.5" width="232" height="2.5" fill="#000"/>
<rect x="2745" y="464.5" width="232" height="2.5" fill="#000"/>
<rect x="2745" y="503" width="232" height="3.5" fill="#000"/>
<rect x="3280" y="437" width="80" height="3.5" fill="#000"/>
<rect x="3280" y="459.5" width="80" height="2.5" fill="#000"/>
<rect x="3280" y="464.5" width="80" height="2.5" fill="#000"/>
<rect x="3280" y="503" width="80" height="3.5" fill="#000"/>
<rect x="1480" y="441" width="18" height="163" fill="url(#zzv)"/>
<rect x="1501" y="462" width="32" height="142" fill="url(#dg)"/>
<rect x="1475.5" y="437" width="4.5" height="167" fill="#000"/>
<rect x="1497" y="458" width="4" height="146" fill="#000"/>
<rect x="1533" y="495" width="13" height="109" fill="#000"/>
<line x1="1539.5" y1="495" x2="1539.5" y2="604" stroke="#fff" stroke-width="1.6" stroke-dasharray="14 6 3 6" stroke-dashoffset="0" stroke-linecap="butt"/>
<rect x="1475.5" y="437" width="70.5" height="4" fill="#000"/>
<rect x="1475.5" y="600" width="70.5" height="4" fill="#000"/>
<rect x="1480" y="844" width="18" height="262" fill="url(#zzv)"/>
<rect x="1501" y="844" width="32" height="262" fill="url(#dg)"/>
<rect x="1475.5" y="844" width="4.5" height="262" fill="#000"/>
<rect x="1497" y="844" width="4" height="262" fill="#000"/>
<rect x="1533" y="844" width="13" height="262" fill="#000"/>
<line x1="1539.5" y1="844" x2="1539.5" y2="1106" stroke="#fff" stroke-width="1.6" stroke-dasharray="14 6 3 6" stroke-dashoffset="0" stroke-linecap="butt"/>
<rect x="1475.5" y="844" width="70.5" height="4" fill="#000"/>
<rect x="1475.5" y="1102" width="70.5" height="4" fill="#000"/>
<rect x="1480" y="1347" width="18" height="250" fill="url(#zzv)"/>
<rect x="1501" y="1347" width="32" height="250" fill="url(#dg)"/>
<rect x="1475.5" y="1347" width="4.5" height="250" fill="#000"/>
<rect x="1497" y="1347" width="4" height="250" fill="#000"/>
<rect x="1533" y="1347" width="13" height="250" fill="#000"/>
<line x1="1539.5" y1="1347" x2="1539.5" y2="1597" stroke="#fff" stroke-width="1.6" stroke-dasharray="14 6 3 6" stroke-dashoffset="0" stroke-linecap="butt"/>
<rect x="1475.5" y="1347" width="70.5" height="4" fill="#000"/>
<rect x="1475.5" y="1593" width="70.5" height="4" fill="#000"/>
<rect x="1476" y="604" width="3.5" height="240" fill="#000"/>
<rect x="1497" y="604" width="2.5" height="240" fill="#000"/>
<rect x="1503" y="604" width="2.5" height="240" fill="#000"/>
<rect x="1543" y="604" width="3" height="240" fill="#000"/>
<rect x="1476" y="1106" width="3.5" height="241" fill="#000"/>
<rect x="1497" y="1106" width="2.5" height="241" fill="#000"/>
<rect x="1503" y="1106" width="2.5" height="241" fill="#000"/>
<rect x="1543" y="1106" width="3" height="241" fill="#000"/>
<rect x="1476" y="1597" width="3.5" height="31" fill="#000"/>
<rect x="1497" y="1597" width="2.5" height="31" fill="#000"/>
<rect x="1503" y="1597" width="2.5" height="31" fill="#000"/>
<rect x="1543" y="1597" width="3" height="31" fill="#000"/>
<line x1="2040" y1="506" x2="2040" y2="1628" stroke="#000" stroke-width="4" stroke-dasharray="40 10" stroke-dashoffset="0" stroke-linecap="butt"/>
<line x1="2077.5" y1="506" x2="2077.5" y2="1628" stroke="#000" stroke-width="4" stroke-dasharray="40 10" stroke-dashoffset="0" stroke-linecap="butt"/>
<rect x="2051.5" y="506" width="14" height="797" fill="#000"/>
<line x1="2060.5" y1="512" x2="2060.5" y2="1297" stroke="#fff" stroke-width="1.6" stroke-dasharray="14 40" stroke-dashoffset="0" stroke-linecap="butt"/>
<rect x="2051.5" y="1418" width="14" height="210" fill="#000"/>
<line x1="2060.5" y1="1424" x2="2060.5" y2="1622" stroke="#fff" stroke-width="1.6" stroke-dasharray="14 40" stroke-dashoffset="0" stroke-linecap="butt"/>
<line x1="2059" y1="1303" x2="2059" y2="1418" stroke="#000" stroke-width="3" stroke-dasharray="35 15" stroke-dashoffset="0" stroke-linecap="butt"/>
<line x1="2574" y1="506" x2="2574" y2="1628" stroke="#000" stroke-width="4" stroke-dasharray="40 10" stroke-dashoffset="0" stroke-linecap="butt"/>
<line x1="2611" y1="506" x2="2611" y2="1453" stroke="#000" stroke-width="4" stroke-dasharray="40 10" stroke-dashoffset="0" stroke-linecap="butt"/>
<line x1="2611" y1="1492" x2="2611" y2="1628" stroke="#000" stroke-width="4" stroke-linecap="butt"/>
<rect x="2585.5" y="506" width="14" height="452" fill="#000"/>
<line x1="2594.5" y1="512" x2="2594.5" y2="952" stroke="#fff" stroke-width="1.6" stroke-dasharray="14 40" stroke-dashoffset="0" stroke-linecap="butt"/>
<line x1="2593" y1="995" x2="2593" y2="1628" stroke="#000" stroke-width="4.5" stroke-dasharray="47 35" stroke-dashoffset="0" stroke-linecap="butt"/>
<line x1="3108.5" y1="506" x2="3108.5" y2="1453" stroke="#000" stroke-width="4" stroke-dasharray="40 10" stroke-dashoffset="0" stroke-linecap="butt"/>
<line x1="3108.5" y1="1492" x2="3108.5" y2="1628" stroke="#000" stroke-width="4" stroke-dasharray="40 10" stroke-dashoffset="0" stroke-linecap="butt"/>
<line x1="3146" y1="506" x2="3146" y2="1628" stroke="#000" stroke-width="4" stroke-dasharray="40 10" stroke-dashoffset="0" stroke-linecap="butt"/>
<line x1="3127.5" y1="506" x2="3127.5" y2="1628" stroke="#000" stroke-width="5" stroke-dasharray="42 12" stroke-dashoffset="0" stroke-linecap="butt"/>
<line x1="2403" y1="290" x2="2403" y2="1628" stroke="#000" stroke-width="4" stroke-dasharray="42 14" stroke-dashoffset="0" stroke-linecap="butt"/>
<path d="M2403 290V248q0-4 8-5H2430" fill="none" stroke="#000" stroke-width="4"/>
<line x1="1546" y1="958" x2="3360" y2="958" stroke="#000" stroke-width="4.5" stroke-dasharray="40 10" stroke-dashoffset="0" stroke-linecap="butt"/>
<line x1="1546" y1="977.5" x2="3360" y2="977.5" stroke="#000" stroke-width="3.5" stroke-dasharray="47 35" stroke-dashoffset="0" stroke-linecap="butt"/>
<line x1="1546" y1="994.5" x2="3360" y2="994.5" stroke="#000" stroke-width="4.5" stroke-dasharray="40 10" stroke-dashoffset="0" stroke-linecap="butt"/>
<rect x="2078" y="984" width="39" height="8" fill="url(#tri)"/>
<rect x="2078" y="981" width="39" height="3" fill="#000"/>
<rect x="2078" y="992" width="39" height="5" fill="#000"/>
<rect x="2078" y="981" width="2.5" height="14" fill="#000"/>
<rect x="2114.5" y="981" width="2.5" height="14" fill="#000"/>
<rect x="2235" y="984" width="339" height="8" fill="url(#tri)"/>
<rect x="2235" y="981" width="339" height="3" fill="#000"/>
<rect x="2235" y="992" width="339" height="5" fill="#000"/>
<rect x="2235" y="981" width="2.5" height="14" fill="#000"/>
<rect x="2571.5" y="981" width="2.5" height="14" fill="#000"/>
<rect x="2611" y="984" width="275" height="8" fill="url(#tri)"/>
<rect x="2611" y="981" width="275" height="3" fill="#000"/>
<rect x="2611" y="992" width="275" height="5" fill="#000"/>
<rect x="2611" y="981" width="2.5" height="14" fill="#000"/>
<rect x="2883.5" y="981" width="2.5" height="14" fill="#000"/>
<rect x="3064" y="984" width="45" height="8" fill="url(#tri)"/>
<rect x="3064" y="981" width="45" height="3" fill="#000"/>
<rect x="3064" y="992" width="45" height="5" fill="#000"/>
<rect x="3064" y="981" width="2.5" height="14" fill="#000"/>
<rect x="3106.5" y="981" width="2.5" height="14" fill="#000"/>
<rect x="3146" y="984" width="47" height="8" fill="url(#tri)"/>
<rect x="3146" y="981" width="47" height="3" fill="#000"/>
<rect x="3146" y="992" width="47" height="5" fill="#000"/>
<rect x="3146" y="981" width="2.5" height="14" fill="#000"/>
<rect x="3190.5" y="981" width="2.5" height="14" fill="#000"/>
<rect x="2040" y="958" width="38" height="4" fill="#000"/>
<rect x="2040" y="991" width="38" height="4" fill="#000"/>
<path d="M2042 985 L2066 961M2052 993 L2076 968" stroke="#000" stroke-width="5"/>
<rect x="2574" y="958" width="37" height="4" fill="#000"/>
<rect x="2574" y="991" width="37" height="4" fill="#000"/>
<path d="M2576 985 L2599 961M2586 993 L2609 968" stroke="#000" stroke-width="5"/>
<rect x="3108" y="958" width="38" height="4" fill="#000"/>
<rect x="3108" y="991" width="38" height="4" fill="#000"/>
<path d="M3110 985 L3134 961M3120 993 L3144 968" stroke="#000" stroke-width="5"/>
<rect x="1546" y="1453.5" width="494" height="4.5" fill="#000"/>
<rect x="1546" y="1457" width="494" height="8" fill="url(#tri2)"/>
<rect x="1546" y="1464" width="494" height="3.5" fill="#000"/>
<line x1="2078" y1="1454" x2="3331" y2="1454" stroke="#000" stroke-width="4.5" stroke-dasharray="40 10" stroke-dashoffset="0" stroke-linecap="butt"/>
<line x1="1546" y1="1473.7" x2="3331" y2="1473.7" stroke="#000" stroke-width="4.5" stroke-dasharray="47 35" stroke-dashoffset="0" stroke-linecap="butt"/>
<line x1="1546" y1="1473.7" x2="3331" y2="1473.7" stroke="#8a8a8a" stroke-width="1.2" stroke-linecap="butt"/>
<line x1="1546" y1="1492.5" x2="3331" y2="1492.5" stroke="#000" stroke-width="4.5" stroke-dasharray="40 10" stroke-dashoffset="0" stroke-linecap="butt"/>
<path d="M2042 1482 L2066 1456M2052 1492 L2076 1464" stroke="#000" stroke-width="5"/>
<path d="M2576 1482 L2599 1456M2586 1492 L2609 1464" stroke="#000" stroke-width="5"/>
<path d="M3110 1482 L3134 1456M3120 1492 L3144 1464" stroke="#000" stroke-width="5"/>
<line x1="3108.5" y1="242" x2="3108.5" y2="242" stroke="#000" stroke-width="1" stroke-linecap="butt"/>
<line x1="2119" y1="995" x2="2119" y2="1110" stroke="#000" stroke-width="3" stroke-linecap="butt"/>
<path d="M2119 1110 A115 115 0 0 0 2234 995" fill="none" stroke="#000" stroke-width="3"/>
<line x1="2886" y1="995" x2="2886" y2="1085" stroke="#000" stroke-width="3" stroke-linecap="butt"/>
<line x1="3064" y1="995" x2="3064" y2="1085" stroke="#000" stroke-width="3" stroke-linecap="butt"/>
<path d="M2886 1085 A89 89 0 0 0 2975 996" fill="none" stroke="#000" stroke-width="3"/>
<path d="M3064 1085 A89 89 0 0 1 2975 996" fill="none" stroke="#000" stroke-width="3"/>
<line x1="3193" y1="995" x2="3193" y2="1085" stroke="#000" stroke-width="3" stroke-linecap="butt"/>
<line x1="3371" y1="995" x2="3371" y2="1085" stroke="#000" stroke-width="3" stroke-linecap="butt"/>
<path d="M3193 1085 A89 89 0 0 0 3282 996" fill="none" stroke="#000" stroke-width="3"/>
<path d="M3371 1085 A89 89 0 0 1 3282 996" fill="none" stroke="#000" stroke-width="3"/>
<line x1="2052" y1="1303.5" x2="2078" y2="1303.5" stroke="#000" stroke-width="3.5" stroke-linecap="butt"/>
<line x1="2052" y1="1418" x2="2180" y2="1418" stroke="#000" stroke-width="3.5" stroke-linecap="butt"/>
<path d="M2078 1303.5 A101 114.5 0 0 1 2179.5 1418" fill="none" stroke="#000" stroke-width="3"/>
<line x1="1787" y1="342" x2="1787" y2="582" stroke="#000" stroke-width="3" stroke-linecap="butt"/>
<text x="1773" y="427" font-size="33" text-anchor="start" font-weight="normal" fill="#111" transform="rotate(-90 1773 427)">2,00</text>
<text x="1823.5" y="427" font-size="33" text-anchor="start" font-weight="normal" fill="#111" transform="rotate(-90 1823.5 427)">1,50</text>
<line x1="2326" y1="342" x2="2326" y2="582" stroke="#000" stroke-width="3" stroke-linecap="butt"/>
<text x="2312" y="427" font-size="33" text-anchor="start" font-weight="normal" fill="#111" transform="rotate(-90 2312 427)">2,00</text>
<text x="2362.5" y="427" font-size="33" text-anchor="start" font-weight="normal" fill="#111" transform="rotate(-90 2362.5 427)">1,50</text>
<text x="2326" y="336.5" font-size="31.5" text-anchor="middle" font-weight="normal" fill="#111">02</text>
<line x1="2860" y1="342" x2="2860" y2="582" stroke="#000" stroke-width="3" stroke-linecap="butt"/>
<text x="2846" y="427" font-size="33" text-anchor="start" font-weight="normal" fill="#111" transform="rotate(-90 2846 427)">2,00</text>
<text x="2896.5" y="427" font-size="33" text-anchor="start" font-weight="normal" fill="#111" transform="rotate(-90 2896.5 427)">1,50</text>
<text x="2860" y="336.5" font-size="31.5" text-anchor="middle" font-weight="normal" fill="#111">03</text>
<line x1="2177" y1="870" x2="2177" y2="1071" stroke="#000" stroke-width="3" stroke-linecap="butt"/>
<text x="2177" y="861" font-size="31" text-anchor="middle" font-weight="normal" fill="#111">01</text>
<text x="2161" y="954" font-size="32.5" text-anchor="start" font-weight="normal" fill="#111" transform="rotate(-90 2161 954)">1,00</text>
<text x="2210" y="954" font-size="32.5" text-anchor="start" font-weight="normal" fill="#111" transform="rotate(-90 2210 954)">2,10</text>
<line x1="2974" y1="870" x2="2974" y2="1071" stroke="#000" stroke-width="3" stroke-linecap="butt"/>
<text x="2974" y="861" font-size="31" text-anchor="middle" font-weight="normal" fill="#111">02</text>
<text x="2958" y="954" font-size="32.5" text-anchor="start" font-weight="normal" fill="#111" transform="rotate(-90 2958 954)">1,00</text>
<text x="3007" y="954" font-size="32.5" text-anchor="start" font-weight="normal" fill="#111" transform="rotate(-90 3007 954)">2,10</text>
<line x1="3281" y1="870" x2="3281" y2="1071" stroke="#000" stroke-width="3" stroke-linecap="butt"/>
<text x="3281" y="861" font-size="31" text-anchor="middle" font-weight="normal" fill="#111">03</text>
<text x="3265" y="954" font-size="32.5" text-anchor="start" font-weight="normal" fill="#111" transform="rotate(-90 3265 954)">1,00</text>
<text x="3314" y="954" font-size="32.5" text-anchor="start" font-weight="normal" fill="#111" transform="rotate(-90 3314 954)">2,10</text>
<line x1="1379.5" y1="728" x2="1621" y2="728" stroke="#000" stroke-width="3" stroke-linecap="butt"/>
<text x="1373" y="729" font-size="32" text-anchor="middle" font-weight="normal" fill="#111" transform="rotate(-90 1373 729)">21</text>
<text x="1403" y="714" font-size="32" text-anchor="start" font-weight="normal" fill="#111">2,00</text>
<text x="1403" y="764" font-size="32" text-anchor="start" font-weight="normal" fill="#111">1,50</text>
<line x1="1379.5" y1="1224.5" x2="1621" y2="1224.5" stroke="#000" stroke-width="3" stroke-linecap="butt"/>
<text x="1373" y="1225.5" font-size="32" text-anchor="middle" font-weight="normal" fill="#111" transform="rotate(-90 1373 1225.5)">20</text>
<text x="1403" y="1210.5" font-size="32" text-anchor="start" font-weight="normal" fill="#111">2,00</text>
<text x="1403" y="1260.5" font-size="32" text-anchor="start" font-weight="normal" fill="#111">1,50</text>
<line x1="1938" y1="1360.5" x2="2140" y2="1360.5" stroke="#000" stroke-width="3" stroke-linecap="butt"/>
<text x="1931" y="1360" font-size="32" text-anchor="middle" font-weight="normal" fill="#111" transform="rotate(-90 1931 1360)">07</text>
<text x="1963" y="1347" font-size="31.5" text-anchor="start" font-weight="normal" fill="#111">1,00</text>
<text x="1963" y="1398" font-size="31.5" text-anchor="start" font-weight="normal" fill="#111">2,10</text>
<text x="1674" y="652.5" font-size="42" text-anchor="start" font-weight="bold" fill="#111">Büros</text>
<text x="1674" y="702.5" font-size="33" fill="#111">31,24 m<tspan font-size="21" dy="-13">2</tspan></text>
<text x="2228" y="653" font-size="42" text-anchor="start" font-weight="bold" fill="#111">Büro-Leitung</text>
<text x="2359" y="704" font-size="33" fill="#111">15,31 m<tspan font-size="21" dy="-13">2</tspan></text>
<text x="3060" y="651.5" font-size="42" text-anchor="start" font-weight="bold" fill="#111">Speisesaal</text>
<text x="3144" y="702" font-size="33" fill="#111">30,46 m<tspan font-size="21" dy="-13">2</tspan></text>
<rect x="1871" y="573.5" width="59" height="29" fill="#fff" stroke="#000" stroke-width="3"/>
<g fill="none" stroke="#111" stroke-width="2.8"><ellipse cx="1892" cy="588" rx="8.3" ry="10"/><ellipse cx="1909.5" cy="588" rx="8.3" ry="10"/></g>
<line x1="1930" y1="587.5" x2="2085" y2="587.5" stroke="#000" stroke-width="3" stroke-linecap="butt"/>
<rect x="2405" y="575" width="59" height="28" fill="#fff" stroke="#000" stroke-width="3"/>
<g fill="none" stroke="#111" stroke-width="2.8"><ellipse cx="2426" cy="589" rx="8.3" ry="10"/><ellipse cx="2443.5" cy="589" rx="8.3" ry="10"/></g>
<line x1="2464" y1="588" x2="2626" y2="588" stroke="#000" stroke-width="3" stroke-linecap="butt"/>
<rect x="2405.5" y="800" width="28.5" height="60" fill="#fff" stroke="#000" stroke-width="3"/>
<g fill="none" stroke="#111" stroke-width="3.3"><ellipse cx="2419.5" cy="820.5" rx="9.5" ry="7.5"/><ellipse cx="2419.5" cy="837.5" rx="10.5" ry="9"/></g>
<line x1="2417.5" y1="860" x2="2417.5" y2="1021" stroke="#000" stroke-width="3" stroke-linecap="butt"/>
<g fill="none" stroke="#000" stroke-width="3.5">
<path d="M2611 1489H2841V1628"/><path d="M2646 1628V1554H2801L2815 1628"/>
<path d="M2619 1521V1628M2628 1521V1628M2637 1521V1628M2810 1521V1628M2820 1521V1628M2830 1521V1628"/>
<path d="M2673 1494V1552M2683 1494V1552M2767 1494V1552M2777 1494V1552M2683 1526H2767"/>
<path d="M2630 1494 2800 1550"/></g>
<rect x="2709" y="1516" width="30" height="20" fill="#000"/>
</svg>

<!-- /PLAN -->
<!-- OVERLAY -->
<!-- collapse tab -->
<div class="a" style="left:978px;top:891px;width:49px;height:90px;background:#ebeff3;border:2px solid #b9c6d3;border-left:none;border-radius:0 16px 16px 0"></div>
<svg style="left:992px;top:922px" width="18" height="28" viewBox="0 0 18 28"><path d="M14 3 3.5 14 14 25" fill="none" stroke="#333" stroke-width="3.6" stroke-linecap="round" stroke-linejoin="round"/></svg>
<!-- plan toolbar -->
<div class="a" style="left:1006px;top:267px;width:955px;height:78px;background:#fff;border:2px solid #b9c6d3;border-radius:10px;box-shadow:0 2px 6px rgba(0,0,0,0.08)"></div>
<svg style="left:1033px;top:293px" width="26" height="26"><path d="M13 0V26M0 13H26" stroke="#111" stroke-width="4"/></svg>
<svg style="left:1101px;top:304px" width="26" height="4"><path d="M0 2H26" stroke="#111" stroke-width="4"/></svg>
<div class="sep" style="left:1152px;top:286px;height:39px"></div>
<svg style="left:1174px;top:292px" width="36" height="28" viewBox="0 0 36 28"><path d="M2 14C6 6 11.5 2 18 2s12 4 16 12c-4 8-9.5 12-16 12S6 22 2 14z" fill="none" stroke="#111" stroke-width="3.2" stroke-linejoin="round"/><circle cx="18" cy="14" r="6" fill="none" stroke="#111" stroke-width="3.2"/><path d="M18 8a6 6 0 0 0-6 6h6z" fill="#111"/></svg>
<svg style="left:1246px;top:292px" width="28" height="28" viewBox="0 0 28 28"><path d="M1.5 9V1.5H9M19 1.5H26.5V9M26.5 19V26.5H19M9 26.5H1.5V19" fill="none" stroke="#111" stroke-width="3.4"/></svg>
<svg style="left:1312px;top:290px" width="32" height="32" viewBox="0 0 32 32"><g fill="none" stroke="#111" stroke-width="3"><path d="M2 2 11 11M30 2 21 11M2 30 11 21M30 30 21 21"/><path d="M4 12H12V4M28 12H20V4M4 20H12V28M28 20H20V28"/></g></svg>
<div class="a" style="left:1366px;top:276px;width:60px;height:60px;background:#f1f1f1;border-radius:9px"></div>
<svg style="left:1379px;top:289px" width="34" height="34" viewBox="0 0 34 34"><circle cx="17" cy="17" r="15" fill="none" stroke="#111" stroke-width="3.2"/><circle cx="17" cy="10.5" r="2.3" fill="#111"/><path d="M13.5 15H18.5V23.5H21V25.5H13V23.5H15.5V17H13.5z" fill="#111"/></svg>
<div class="a" style="left:1434px;top:267px;width:279px;height:79px;border:5.5px solid #ff8200;border-radius:7px;background:#fff"></div>
<svg style="left:1473px;top:289px" width="34" height="34" viewBox="0 0 34 34"><path d="M7 9.5A13.5 13.5 0 1 1 4.3 20" fill="none" stroke="#111" stroke-width="3.4" stroke-linecap="round"/><path d="M2 4V13H11z" fill="#111"/><path d="M17 10V17.5L22 22" fill="none" stroke="#111" stroke-width="3.2" stroke-linecap="round"/></svg>
<div class="t" style="left:1520px;top:294px;font-size:27.1px;color:#111">Versions</div>
<div class="a" style="left:1640px;top:291px;width:32px;height:32px;border-radius:50%;background:#ebeff3;border:2px solid #b9c6d3"></div>
<div class="t" style="left:1650px;top:299px;font-size:18px;color:#111">2</div>
<svg style="left:1750px;top:290px" width="32" height="32" viewBox="0 0 32 32"><path d="M16 1V19" stroke="#111" stroke-width="3.6"/><path d="M7.5 12 16 20.5 24.5 12" fill="none" stroke="#111" stroke-width="3.6"/><path d="M3 23H11L16 27 21 23H29c1.7 0 3 1.3 3 3v3c0 1.7-1.3 3-3 3H3c-1.7 0-3-1.3-3-3v-3c0-1.7 1.3-3 3-3z" fill="#111"/><circle cx="26" cy="27.5" r="1.6" fill="#fff"/></svg>
<div class="t" style="left:1797px;top:294px;font-size:27.7px;color:#111">Download</div>
<!-- orange annotation -->
<svg style="left:0;top:0" width="3360" height="1628"><path d="M1078 518 1500 376" stroke="#ff8200" stroke-width="11.5" stroke-linecap="round"/><path d="M1487 357.5 1530 366 1501 397z" fill="#ff8200" stroke="#ff8200" stroke-width="4" stroke-linejoin="round"/></svg>
<div class="a" style="left:1557px;top:348px;width:56px;height:56px;border-radius:50%;background:#ff8200"></div>
<div class="t" style="left:1577px;top:361.5px;font-size:28.5px;color:#111">2</div>
<!-- marker pin -->
<svg style="left:2284px;top:1056px" width="80" height="92" viewBox="0 0 80 92"><defs><radialGradient id="sh" cx="0.7" cy="0.3" r="0.8"><stop offset="0" stop-color="#e6e6e6"/><stop offset="1" stop-color="#cfcfcf"/></radialGradient></defs><path d="M29 86C45 78 68 68 75 58 80 50 74 43 62 43 52 44 44 52 40 60z" fill="url(#sh)"/><path d="M29 2.7C14.5 2.7 2.7 14.3 2.7 28.8c0 16 26.3 57.8 26.3 57.8s26.2-41.8 26.2-57.8C55.2 14.3 43.5 2.7 29 2.7z" fill="#0897f9"/><path d="M29 2.7C14.5 2.7 2.7 14.3 2.7 28.8c0 16 26.3 57.8 26.3 57.8z" fill="#0780da"/><circle cx="29" cy="28.6" r="17" fill="#fff"/><path d="M29 11.6a17 17 0 0 0 0 34z" fill="#e6e6e6"/><circle cx="29" cy="28.6" r="10.8" fill="#e0440f"/></svg>
<!-- draw toolbar -->
<div class="a" style="left:1008px;top:1527px;width:469px;height:77px;background:#fff;border:2px solid #b9c6d3;border-radius:12px;box-shadow:0 2px 6px rgba(0,0,0,0.08)"></div>
<div class="a" style="left:1016px;top:1536px;width:60px;height:60px;background:#d5e3f0;border-radius:8px"></div>
<svg style="left:1033px;top:1551px" width="26" height="30" viewBox="0 0 26 30"><path d="M3 2 22 18H13.5L18 27.5 14.5 29 10 19.5 3 26z" fill="none" stroke="#111" stroke-width="2.8" stroke-linejoin="round"/></svg>
<svg style="left:1097px;top:1550px" width="32" height="32" viewBox="0 0 32 32"><path d="M4 28 6 20 22 4 28 10 12 26z" fill="none" stroke="#111" stroke-width="3" stroke-linejoin="round"/><path d="M20 6 26 12" stroke="#111" stroke-width="3"/><path d="M24 2 30 8 27 10 22 5z" fill="#111"/></svg>
<svg style="left:1154px;top:1562px" width="16" height="9"><path d="M0 0H16L8 9Z" fill="#111"/></svg>
<svg style="left:1204px;top:1554px" width="34" height="24" viewBox="0 0 34 24"><rect x="1.6" y="1.6" width="30.8" height="20.8" rx="3" fill="none" stroke="#111" stroke-width="3.2"/></svg>
<svg style="left:1263px;top:1562px" width="16" height="9"><path d="M0 0H16L8 9Z" fill="#111"/></svg>
<svg style="left:1316px;top:1551px" width="30" height="30" viewBox="0 0 30 30"><path d="M2 7V2H28V7M15 2V28M9 28H21" fill="none" stroke="#111" stroke-width="3"/></svg>
<svg style="left:1382px;top:1550px" width="32" height="32" viewBox="0 0 32 32"><path d="M3 21 21 3 29 11 11 29z" fill="none" stroke="#111" stroke-width="3" stroke-linejoin="round"/><path d="M9 15 12 18M13 11 16 14M17 7 20 10" stroke="#111" stroke-width="2.6"/></svg>
<svg style="left:1440px;top:1562px" width="16" height="9"><path d="M0 0H16L8 9Z" fill="#111"/></svg>
<!-- help -->
<div class="a" style="left:3220px;top:1390px;width:100px;height:100px;border-radius:50%;background:#0561c8;box-shadow:0 3px 10px rgba(0,0,0,0.25)"></div>
<svg style="left:3252px;top:1414px" width="36" height="54" viewBox="0 0 36 54"><path d="M5 14C5 7 10.5 2.5 18 2.5S31 7.5 31 14c0 6-4 8.5-7.5 11-3 2-4.5 4-4.5 7.5v2" fill="none" stroke="#fff" stroke-width="7" stroke-linecap="round"/><circle cx="19" cy="47" r="4.8" fill="#fff"/></svg>
<!-- bottom fade -->
<div class="a" style="left:120px;top:1530px;width:3240px;height:98px;background:linear-gradient(to bottom,rgba(0,0,0,0) 0%,rgba(0,0,0,0.02) 40%,rgba(0,0,0,0.09) 100%)"></div>
<!-- window corners -->
<svg style="left:0;top:1606px" width="22" height="22"><path d="M0 0V22H22A22 22 0 0 1 0 0z" fill="#111"/></svg>
<svg style="left:3338px;top:1606px" width="22" height="22"><path d="M22 0V22H0A22 22 0 0 0 22 0z" fill="#111"/></svg>

<!-- /OVERLAY -->
</body></html>
